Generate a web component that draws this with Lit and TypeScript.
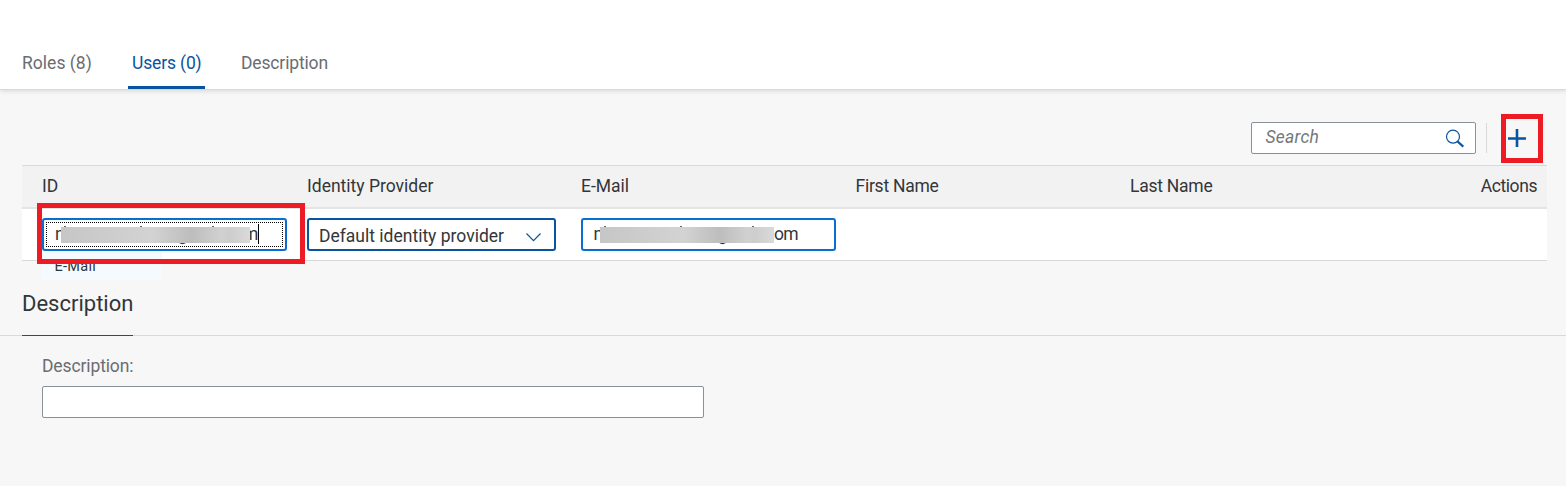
import { LitElement, html, css } from "lit";
import { customElement } from "lit/decorators.js";

@customElement("app-root")
export class AppRoot extends LitElement {
  static styles = css`
    :host {
      display: block;
      height: 486px;
      overflow: hidden;
      background: #f7f7f7;
      color: #32363a;
      font: 17.5px/22px Roboto, sans-serif;
      letter-spacing: -0.25px;
      white-space: nowrap;
    }
    * { box-sizing: border-box; }
    .tabs {
      display: flex;
      height: 90px;
      padding: 36px 0 0 18px;
      background: #fff;
      border-bottom: 1px solid #d9d9d9;
      box-shadow: 0 1px 5px rgba(0, 0, 0, 0.13);
      color: #6a6d70;
      gap: 32px;
    }
    .tab {
      height: 53px;
      padding: 16px 4px 0;
      border-bottom: 3px solid transparent;
      letter-spacing: -0.15px;
    }
    .tab.first { width: 78px; letter-spacing: 0.02px; }
    .tab.active {
      width: 77px;
      color: #0854a0;
      border-bottom-color: #0854a0;
      border-radius: 2px 2px 0 0;
    }
    .toolbar {
      display: flex;
      justify-content: flex-end;
      height: 75px;
      padding: 24px 23px 0 0;
    }
    .search {
      display: flex;
      align-items: center;
      justify-content: space-between;
      width: 225px;
      height: 32px;
      margin-top: 8px;
      padding: 0 11px 2px 13.5px;
      border: 1px solid #89919a;
      border-radius: 2px;
      background: #fff;
      color: #74777a;
      font-style: italic;
      letter-spacing: 0.25px;
    }
    .search svg { margin-top: 3px; }
    .sep {
      width: 1px;
      height: 30px;
      margin: 9px 14px 0 10px;
      background: #d9d9d9;
    }
    .add {
      width: 42px;
      height: 49px;
      padding: 10px 0 0 2px;
      border: 5px solid #ed1c24;
    }
    .add svg, .chev { display: block; }
    .table { margin: 0 19px 0 22px; border-bottom: 1px solid #d9d9d9; }
    .row {
      display: grid;
      grid-template-columns: 265px 274px 274.5px 274.5px 1fr auto;
      padding: 0 10px 0 20px;
    }
    .head {
      height: 44px;
      padding-top: 9px;
      border-top: 1px solid #d9d9d9;
      border-bottom: 2px solid #e4e4e4;
      background: #f2f2f2;
    }
    .wide { letter-spacing: 0; }
    .tight { letter-spacing: -0.42px; }
    .body { height: 51px; padding-top: 9px; background: #fff; }
    .cell { position: relative; }
    .field {
      display: flex;
      height: 33px;
      padding: 4px 10px 0 11px;
      border: 2px solid #0a6ed1;
      border-radius: 3px;
      background: #fff;
    }
    .id { width: 245px; padding: 2px; }
    .focus {
      display: flex;
      flex: 1;
      height: 25px;
      padding: 0 0 0 8px;
      border: 1px dotted #000;
    }
    .glyph { width: 9px; }
    .mail { width: 255px; padding-top: 3px; padding-left: 10.5px; letter-spacing: -0.7px; }
    .select {
      width: 249px;
      justify-content: space-between;
      border-color: #0854a0;
      padding: 5px 12px 0 10px;
      letter-spacing: 0;
    }
    .chev { margin-top: 6px; }
    .mask { display: block; flex: none; position: relative; margin: 0 0 0 -2.5px; }
    .id .mask { margin-left: -3px; }
    .end { margin-left: -7px; }
    .caret { width: 1px; height: 20px; margin-top: 1px; background: #000; }
    .suggest {
      position: absolute;
      left: 0;
      top: 33px;
      width: 120px;
      height: 29px;
      padding: 5px 12.5px;
      background: #f5faff;
      font-size: 14.5px;
      letter-spacing: 0.3px;
    }
    .mark {
      position: absolute;
      left: -5px;
      top: -15px;
      width: 268px;
      height: 61px;
      border: 5px solid #ed1c24;
    }
    .section {
      height: 75px;
      padding: 29px 0 0 22px;
      border-bottom: 1px solid #d9d9d9;
    }
    .title {
      width: 111px;
      height: 46px;
      border-bottom: 1px solid #0854a0;
      font-size: 22px;
      line-height: 27px;
      letter-spacing: 0;
    }
    .form { padding: 19px 42px; color: #6a6d70; letter-spacing: -0.12px; }
    .input {
      width: 662px;
      height: 32px;
      margin-top: 9px;
      border: 1px solid #89919a;
      border-radius: 2px;
      background: #fff;
    }
  `;

  private mask(width: number, hints: number[], tail: number) {
    return html`<svg class="mask" width=${width} height="22" viewBox="0 0 ${width} 22">
      <defs>
        <linearGradient id="g">
          <stop offset="0" stop-color="#c6c6c6" />
          <stop offset=".48" stop-color="#d3d3d3" />
          <stop offset=".69" stop-color="#bdbdbd" />
          <stop offset=".85" stop-color="#d1d1d1" />
          <stop offset=".89" stop-color="#cdcdcd" />
          <stop offset="1" stop-color="#dadada" />
        </linearGradient>
      </defs>
      ${hints.map((x) => html`<svg x=${x} y="3" width="2" height="2"><rect width="2" height="2" fill="#63666a" /></svg>`)}
      <svg x=${tail} y="18" width="7" height="4"><path d="M.5 1.5Q3.5 3.5 6.5 1.5" fill="none" stroke="#32363a" stroke-width="1.3" /></svg>
      <rect y="4" width=${width} height="16" fill="url(#g)" />
    </svg>`;
  }

  render() {
    return html`
      <div class="tabs">
        <div class="tab first">Roles (8)</div>
        <div class="tab active">Users (0)</div>
        <div class="tab">Description</div>
      </div>
      <div class="toolbar">
        <div class="search">
          <span>Search</span>
          <svg width="19" height="19" viewBox="0 0 19 19" fill="none" stroke="#0854a0">
            <circle cx="8" cy="7.7" r="6.5" stroke-width="1.2" />
            <path d="M12.3 12.3l6 5.3" stroke-width="2.2" />
          </svg>
        </div>
        <div class="sep"></div>
        <div class="add">
          <svg width="18" height="18" viewBox="0 0 18 18"><path d="M9 0v18M0 9.5h18" stroke="#0854a0" stroke-width="2.6" /></svg>
        </div>
      </div>
      <div class="table">
        <div class="row head">
          <span class="wide">ID</span><span class="wide">Identity Provider</span><span class="wide">E-Mail</span>
          <span>First Name</span><span>Last Name</span><span class="tight">Actions</span>
        </div>
        <div class="row body">
          <div class="cell">
            <div class="field id">
              <div class="focus"><span class="glyph">n</span>${this.mask(189, [3, 79, 151], 118)}<span class="end">m</span><i class="caret"></i></div>
            </div>
            <div class="suggest">E-Mail</div>
            <div class="mark"></div>
          </div>
          <div class="cell">
            <div class="field select">
              <span>Default identity provider</span>
              <svg class="chev" width="17" height="12" viewBox="0 0 17 12"><path d="M1.5 2.5L8.5 9.7L15.5 2.5" fill="none" stroke="#0854a0" stroke-width="1.2" /></svg>
            </div>
          </div>
          <div class="cell">
            <div class="field mail"><span class="glyph">n</span>${this.mask(174, [4, 80, 152], 119)}<span>om</span></div>
          </div>
        </div>
      </div>
      <div class="section"><div class="title">Description</div></div>
      <div class="form">
        <div>Description:</div>
        <div class="input"></div>
      </div>
    `;
  }
}
